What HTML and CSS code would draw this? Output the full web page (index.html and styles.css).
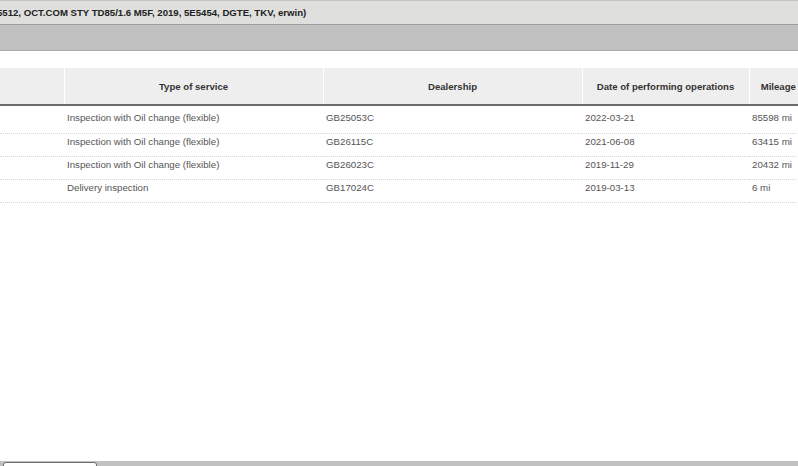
FILE: index.html
```html
<!DOCTYPE html>
<html>
<head>
<meta charset="utf-8">
<link rel="stylesheet" href="styles.css">
</head>
<body>
<div class="page">
  <div class="titlebar"><span class="title">5512, OCT.COM STY TD85/1.6 M5F, 2019, 5E5454, DGTE, TKV, erwin)</span></div>
  <div class="toolbar"></div>
  <div class="content">
    <table class="grid">
      <colgroup>
        <col class="c1"><col class="c2"><col class="c3"><col class="c4"><col class="c5">
      </colgroup>
      <thead>
        <tr>
          <th></th>
          <th>Type of service</th>
          <th>Dealership</th>
          <th>Date of performing operations</th>
          <th>Mileage</th>
        </tr>
      </thead>
      <tbody>
        <tr class="first"><td></td><td>Inspection with Oil change (flexible)</td><td>GB25053C</td><td>2022-03-21</td><td>85598 mi</td></tr>
        <tr><td></td><td>Inspection with Oil change (flexible)</td><td>GB26115C</td><td>2021-06-08</td><td>63415 mi</td></tr>
        <tr><td></td><td>Inspection with Oil change (flexible)</td><td>GB26023C</td><td>2019-11-29</td><td>20432 mi</td></tr>
        <tr><td></td><td>Delivery inspection</td><td>GB17024C</td><td>2019-03-13</td><td>6 mi</td></tr>
      </tbody>
    </table>
  </div>
  <div class="tabbar"><div class="tab"></div></div>
</div>
</body>
</html>
```
FILE: styles.css
```css
html, body {
  margin: 0;
  padding: 0;
  background: #ffffff;
}
.page {
  width: 798px;
  height: 466px;
  overflow: hidden;
  display: flex;
  flex-direction: column;
  font-family: "Liberation Sans", Arial, sans-serif;
}
.titlebar {
  height: 23px;
  border-top: 1px solid #c9c0c0;
  border-bottom: 1px solid #9e9e9e;
  background: #dfdfdd;
  display: flex;
  align-items: center;
  white-space: nowrap;
  overflow: hidden;
  flex: none;
}
.title {
  margin-left: -3px;
  font-size: 9.6px;
  font-weight: bold;
  color: #222;
}
.toolbar {
  height: 25px;
  background: #c1c1c1;
  border-bottom: 1px solid #a9a9a9;
  flex: none;
}
.content {
  flex: 1;
  padding-top: 17px;
  overflow: hidden;
}
.grid {
  border-collapse: collapse;
  table-layout: fixed;
  width: 807px;
}
.c1 { width: 64px; }
.c2 { width: 259px; }
.c3 { width: 259px; }
.c4 { width: 167px; }
.c5 { width: 58px; }
.grid th {
  height: 36px;
  background: #eeeeee;
  border-left: 1px solid #ffffff;
  border-bottom: 2px solid #6a6a6a;
  font-size: 9.6px;
  font-weight: bold;
  color: #333;
  text-align: center;
  padding: 0;
  white-space: nowrap;
  overflow: hidden;
}
.grid th:first-child { border-left: none; }
.grid td {
  height: 23px;
  padding: 1px 0 0 3px;
  vertical-align: top;
  line-height: 14px;
  box-sizing: border-box;
  font-size: 9.7px;
  color: #555;
  border-bottom: 1px dotted #d8d8d8;
  white-space: nowrap;
  overflow: hidden;
}
.grid tr.first td {
  height: 28px;
  padding-top: 5px;
}
.tabbar {
  height: 5px;
  background: #c1c1c1;
  position: relative;
  flex: none;
}
.tab {
  position: absolute;
  left: 3px;
  top: 1px;
  width: 92px;
  height: 8px;
  background: #ffffff;
  border: 1px solid #6e6e6e;
  border-radius: 3px 3px 0 0;
}
```
